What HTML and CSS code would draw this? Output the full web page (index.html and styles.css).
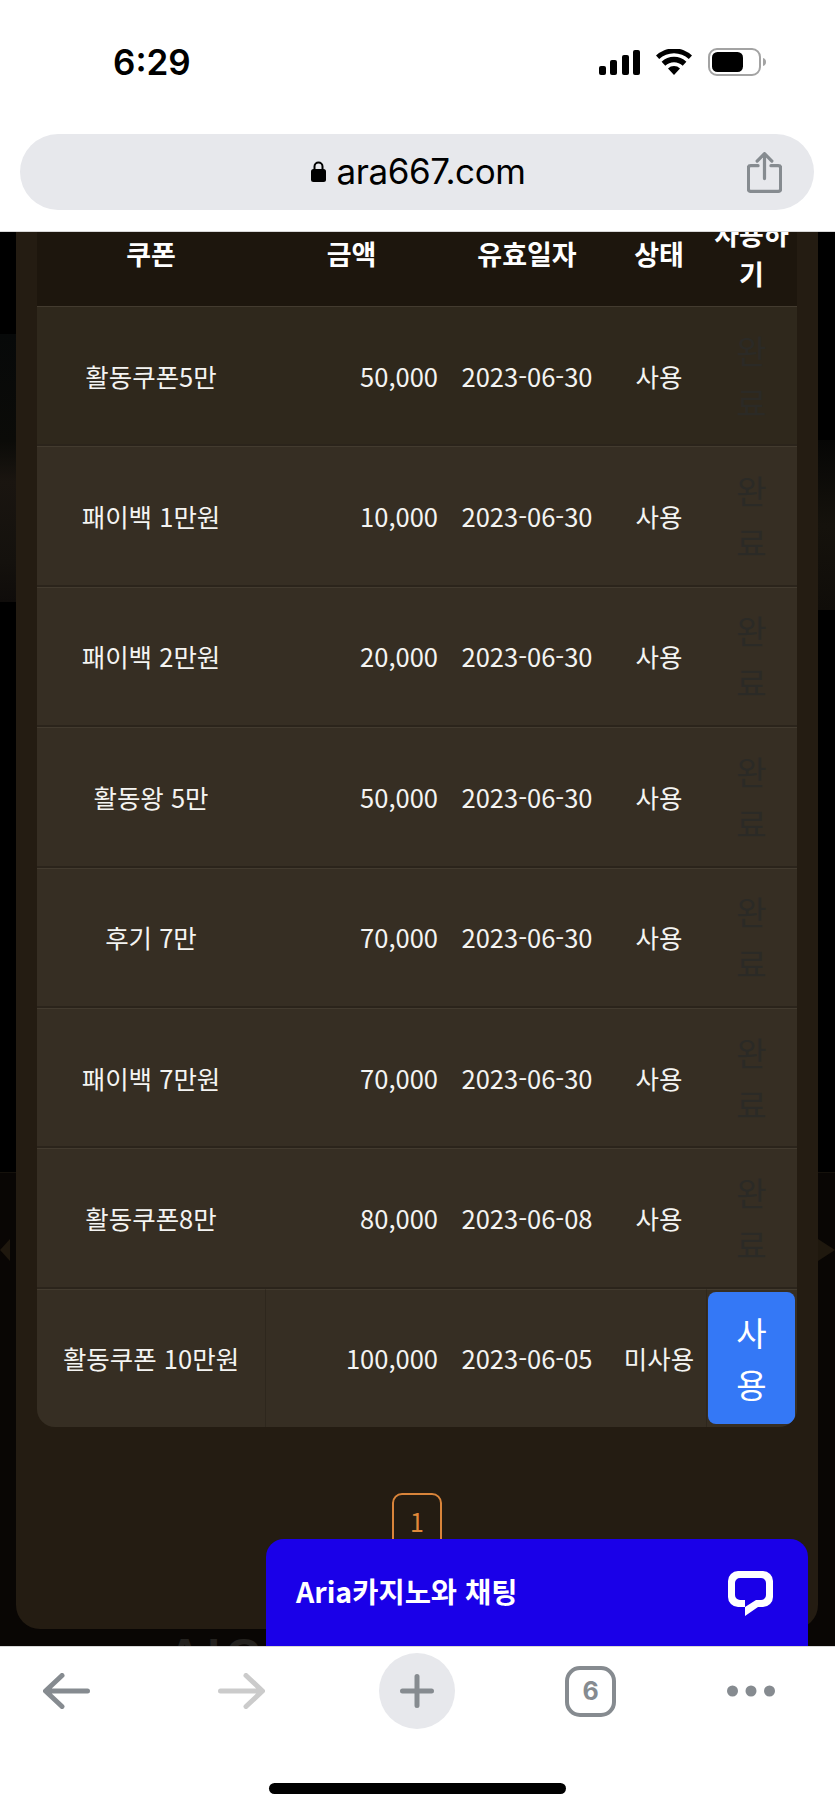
FILE: index.html
```html
<!doctype html>
<html lang="ko">
<head>
    <meta charset="UTF-8">
    <title>쿠폰</title>
    <link rel="stylesheet" href="styles.css">
</head>
<body>
<div class="phone">
    <!-- 상단 브라우저 영역 -->
    <header class="top">
        <div class="status">
            <span class="clock">6:29</span>
            <div class="status-icons">
                <svg class="signal" width="41" height="25" viewBox="0 0 41 25"><rect x="0" y="16" width="7" height="9" rx="2"/><rect x="11" y="10" width="7" height="15" rx="2"/><rect x="23" y="5" width="7" height="20" rx="2"/><rect x="34" y="0" width="7" height="25" rx="2"/></svg>
                <svg class="wifi" width="36" height="26" viewBox="0 0 36 26"><path d="M18 26l-6-6.500a8.500 8.500 0 0 1 12 0zM9.300 16.700l-3.700-4a18 18 0 0 1 24.800 0l-3.700 4a12.500 12.500 0 0 0-17.400 0zM3.200 10.100L0 6.600a26 26 0 0 1 36 0l-3.200 3.500a21.500 21.500 0 0 0-29.600 0z"/></svg>
                <svg class="battery" width="58" height="28" viewBox="0 0 58 28"><rect x="1" y="1" width="51" height="26" rx="8" fill="none" stroke="#a3a3a3" stroke-width="2"/><rect x="4" y="4" width="31" height="20" rx="5.500" fill="#000"/><path d="M55 10c2 .6 3 2 3 4s-1 3.400-3 4z" fill="#a3a3a3"/></svg>
            </div>
        </div>
        <div class="url-bar">
            <svg class="lock" width="15" height="21" viewBox="0 0 15 21"><path d="M3.500 9V5.500a4 4 0 0 1 8 0V9" fill="none" stroke="#000" stroke-width="2"/><rect x="0" y="8" width="15" height="13" rx="2.500"/></svg>
            <span class="url">ara667.com</span>
            <svg class="share" width="35" height="42" viewBox="0 0 38 44" fill="none" stroke="#868b90" stroke-width="3.500" stroke-linecap="round" stroke-linejoin="round"><path d="M19 28V2M11 9l8-8 8 8"/><path d="M12 14H4a2.500 2.500 0 0 0-2.500 2.500v23A2.500 2.500 0 0 0 4 42h30a2.500 2.500 0 0 0 2.500-2.500v-23A2.500 2.500 0 0 0 34 14h-8"/></svg>
        </div>
    </header>

    <!-- 페이지 내용 -->
    <main class="content">
        <div class="art art-left"></div>
        <div class="art art-right"></div>
        <div class="art art-line"></div>
        <div class="art art-tri-l"></div>
        <div class="art art-tri-r"></div>
        <div class="art art-title">AIG</div>

        <div class="panel">
            <div class="table-wrap">
                <table class="coupons">
                    <colgroup>
                        <col class="c-name"><col class="c-amount"><col class="c-date"><col class="c-state"><col class="c-use">
                    </colgroup>
                    <thead>
                        <tr><th>쿠폰</th><th class="th-amount">금액</th><th>유효일자</th><th>상태</th><th>사용하기</th></tr>
                    </thead>
                    <tbody>
                        <tr class="first"><td>활동쿠폰5만</td><td class="num">50,000</td><td>2023-06-30</td><td>사용</td><td><span class="use done">완료</span></td></tr>
                        <tr><td>패이백 1만원</td><td class="num">10,000</td><td>2023-06-30</td><td>사용</td><td><span class="use done">완료</span></td></tr>
                        <tr><td>패이백 2만원</td><td class="num">20,000</td><td>2023-06-30</td><td>사용</td><td><span class="use done">완료</span></td></tr>
                        <tr><td>활동왕 5만</td><td class="num">50,000</td><td>2023-06-30</td><td>사용</td><td><span class="use done">완료</span></td></tr>
                        <tr><td>후기 7만</td><td class="num">70,000</td><td>2023-06-30</td><td>사용</td><td><span class="use done">완료</span></td></tr>
                        <tr><td>패이백 7만원</td><td class="num">70,000</td><td>2023-06-30</td><td>사용</td><td><span class="use done">완료</span></td></tr>
                        <tr><td>활동쿠폰8만</td><td class="num">80,000</td><td>2023-06-08</td><td>사용</td><td><span class="use done">완료</span></td></tr>
                        <tr class="last"><td>활동쿠폰 10만원</td><td class="num">100,000</td><td>2023-06-05</td><td>미사용</td><td><span class="use active">사용</span></td></tr>
                    </tbody>
                </table>
            </div>
            <div class="pages"><span class="page">1</span></div>
        </div>

        <!-- 채팅 위젯 -->
        <div class="chat">
            <span class="chat-title">Aria카지노와 채팅</span>
            <svg class="chat-icon" width="46" height="45" viewBox="0 0 46 45"><path fill="#fff" fill-rule="evenodd" d="M10 0H35a10 10 0 0 1 10 10V26a10 10 0 0 1-10 10H30L17 45V36H10A10 10 0 0 1 0 26V10A10 10 0 0 1 10 0ZM12 7a5 5 0 0 0-5 5V24a5 5 0 0 0 5 5H17V36L28 29H33a5 5 0 0 0 5-5V12a5 5 0 0 0-5-5Z"/></svg>
        </div>
    </main>

    <!-- 하단 브라우저 툴바 -->
    <footer class="bottom">
        <div class="tools">
            <svg class="tool back" width="47" height="36" viewBox="0 0 47 36" fill="none" stroke="#868b90" stroke-width="5" stroke-linecap="round" stroke-linejoin="round"><path d="M44.500 18H3M19 2.500L2.500 18 19 33.500"/></svg>
            <svg class="tool forward" width="47" height="36" viewBox="0 0 47 36" fill="none" stroke="#cbcbcb" stroke-width="5" stroke-linecap="round" stroke-linejoin="round"><path d="M2.500 18H44M28 2.500L44.500 18 28 33.500"/></svg>
            <div class="tool plus"><svg width="34" height="34" viewBox="0 0 34 34" fill="none" stroke="#868b90" stroke-width="5" stroke-linecap="round"><path d="M17 2.500v29M2.500 17h29"/></svg></div>
            <div class="tool tabs">6</div>
            <svg class="tool more" width="48" height="12" viewBox="0 0 48 12" fill="#868b90"><circle cx="5.500" cy="6" r="5.500"/><circle cx="24" cy="6" r="5.500"/><circle cx="42.500" cy="6" r="5.500"/></svg>
        </div>
        <div class="home-bar"></div>
    </footer>
</div>
</body>
</html>
```

FILE: styles.css
```css
* {
    margin: 0;
    padding: 0;
    box-sizing: border-box;
}

html, body {
    height: 100%;
    background: #000;
}

body {
    font-family: "Noto Sans CJK KR", "Noto Sans", sans-serif;
}

.phone {
    width: 835px;
    height: 1811px;
    display: flex;
    flex-direction: column;
    overflow: hidden;
}

/* top */
.top {
    height: 232px;
    flex: none;
    padding-bottom: 21px;
    background: #fff;
    border-bottom: 1px solid #d8d8d8;
}

.status {
    height: 124px;
    margin-bottom: 10px;
    display: flex;
    align-items: center;
    justify-content: space-between;
    padding: 0 69px 0 113px;
}

.clock {
    font-family: Inter, sans-serif;
    font-size: 35px;
    font-weight: 600;
    color: #000;
}

.status-icons {
    display: flex;
    align-items: center;
}

.signal {
    margin-right: 16px;
    margin-top: 1px;
}

.wifi {
    margin-right: 16px;
}

.url-bar {
    position: relative;
    height: 76px;
    margin: 0 21px 0 20px;
    padding: 0 0 2px 3px;
    display: flex;
    align-items: center;
    justify-content: center;
    background: #e7e8ec;
    border-radius: 38px;
}

.lock {
    margin-right: 10px;
}

.url {
    font-family: Inter, sans-serif;
    font-size: 35px;
    color: #000;
    letter-spacing: -0.4px;
}

.share {
    position: absolute;
    right: 32px;
    top: 18px;
}

/* content */
.content {
    position: relative;
    flex: 1;
    min-height: 0;
    overflow: hidden;
    background: #000;
}

.art {
    position: absolute;
}

.art-left {
    left: 0;
    top: 102px;
    width: 16px;
    height: 268px;
    background: linear-gradient(#070909, #0b0b08 40%, #1a1510 55%, #14110d 85%, #0f0c0a);
}

.art-right {
    right: 0;
    top: 208px;
    width: 17px;
    height: 170px;
    background: linear-gradient(#060605, #15120c 50%, #100d09);
}

.art-line {
    left: 0;
    right: 0;
    top: 940px;
    bottom: 0;
    background: #090604;
    border-top: 1px solid #15110b;
}

.art-tri-l,
.art-tri-r {
    top: 1007px;
    width: 0;
    height: 0;
    border-top: 11px solid transparent;
    border-bottom: 11px solid transparent;
}

.art-tri-l {
    left: 0;
    border-right: 10px solid #1f180e;
}

.art-tri-r {
    right: 0;
    border-left: 17px solid #1f180e;
}

.art-title {
    left: 168px;
    top: 1396px;
    font-family: "Liberation Sans", sans-serif;
    font-size: 46px;
    font-weight: 700;
    letter-spacing: 6px;
    color: #24221f;
}

.panel {
    position: relative;
    margin: -30px 17px 0 16px;
    padding: 0 21px 80px;
    background: #241c12;
    border-radius: 0 0 24px 24px;
}

.table-wrap {
    border-radius: 0 0 18px 18px;
    overflow: hidden;
}

.coupons {
    width: 760px;
    table-layout: fixed;
    border-collapse: separate;
    border-spacing: 0;
    color: #fff;
}

.c-name { width: 228px; }
.c-amount { width: 177px; }
.c-date { width: 170px; }
.c-state { width: 94px; }
.c-use { width: 91px; }

.coupons th {
    height: 104px;
    padding: 0 4px;
    font-size: 27px;
    font-weight: 700;
    line-height: 40px;
    text-align: center;
    background: #1d160d;
}

.coupons th.th-amount {
    padding-right: 8px;
}

.coupons td {
    height: 140.4px;
    padding: 0;
    font-size: 25.5px;
    line-height: 36px;
    text-align: center;
    color: #f4f4f2;
    background: #362e23;
    border-top: 1px solid #433b2f;
    border-bottom: 2px solid #2b241b;
}

.coupons .first td {
    background: #2f281c;
}

.coupons td.num {
    text-align: right;
    padding-right: 4px;
}

.coupons .last td {
    height: 138px;
    border-bottom: 0;
}

.coupons .last td:nth-child(2),
.coupons .last td:nth-child(5) {
    border-left: 1px solid #2e271d;
}

.use {
    display: flex;
    align-items: center;
    justify-content: center;
    width: 87px;
    height: 132px;
    margin: 0 auto;
    padding: 0 20px;
    font-size: 33px;
    line-height: 52px;
    border-radius: 8px;
}

.done {
    color: #2b2a26;
}

.active {
    margin-right: 2px;
    background: #3478f6;
    color: #fff;
}

.pages {
    display: flex;
    justify-content: center;
    padding-top: 66px;
}

.page {
    width: 50px;
    height: 56px;
    display: flex;
    align-items: center;
    justify-content: center;
    font-size: 25px;
    color: #e0893a;
    border: 2px solid #d9843a;
    border-radius: 10px;
}

/* chat */
.chat {
    position: absolute;
    right: 27px;
    bottom: 0;
    width: 542px;
    height: 107px;
    padding: 32px 34px 0 30px;
    display: flex;
    align-items: flex-start;
    justify-content: space-between;
    background: #1a00e8;
    border-radius: 18px 18px 0 0;
}

.chat-title {
    font-size: 28.5px;
    font-weight: 700;
    line-height: 40px;
    color: #fff;
}

/* bottom */
.bottom {
    height: 165px;
    flex: none;
    padding-top: 6px;
    background: #fff;
    border-top: 1px solid #d8d8d8;
}

.tools {
    height: 76px;
    display: flex;
    align-items: center;
    padding-left: 43px;
}

.forward { margin-left: 128px; }
.plus { margin-left: 114px; }
.tabs { margin-left: 110px; }
.more { margin-left: 111px; }

.plus {
    width: 76px;
    height: 76px;
    display: flex;
    align-items: center;
    justify-content: center;
    background: #e7e8ec;
    border-radius: 50%;
}

.tabs {
    width: 51px;
    height: 51px;
    display: flex;
    align-items: center;
    justify-content: center;
    font-family: Inter, sans-serif;
    font-size: 25px;
    font-weight: 700;
    color: #868b90;
    border: 4.5px solid #868b90;
    border-radius: 15px;
}

.home-bar {
    width: 297px;
    height: 11px;
    margin: 54px 0 0 269px;
    background: #000;
    border-radius: 6px;
}
```
